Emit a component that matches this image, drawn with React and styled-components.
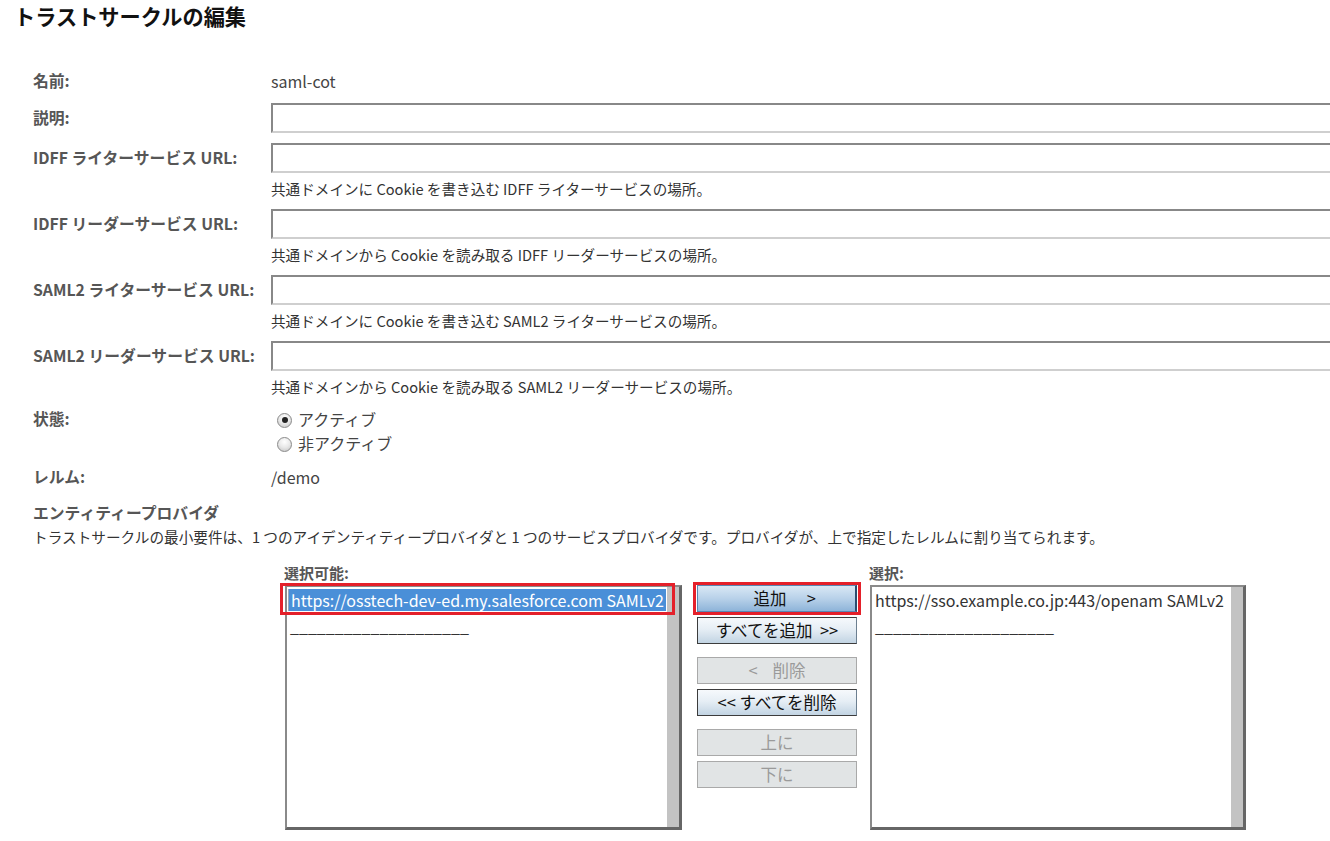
import React from "react";
import styled, { createGlobalStyle, css } from "styled-components";

const GlobalStyle = createGlobalStyle`
  html, body {
    margin: 0;
    padding: 0;
    background: #ffffff;
    overflow: hidden;
  }
  body {
    font-family: "Noto Sans CJK JP", "Noto Sans", sans-serif;
    color: #333;
  }
  * { box-sizing: border-box; }
`;

const Page = styled.div`
  width: 1330px;
  height: 841px;
  overflow: hidden;
`;

const Title = styled.h1`
  margin: 0;
  padding-left: 14px;
  height: 32px;
  line-height: 32px;
  font-size: 21.2px;
  font-weight: 700;
  color: #111;
`;

const Form = styled.div`
  margin-top: 37px;
  padding-left: 33px;
  display: flex;
  flex-direction: column;
  gap: 10px;
`;

const Field = styled.div`
  display: flex;
  align-items: ${(p) => (p.$top ? "flex-start" : "stretch")};
`;

const Label = styled.div`
  width: 238px;
  flex: none;
  font-size: 15.8px;
  font-weight: 700;
  color: #565656;
  line-height: 24px;
  white-space: nowrap;
  ${(p) =>
    p.$input &&
    css`
      line-height: 30px;
    `}
`;

const Content = styled.div`
  flex: 1;
  display: flex;
  flex-direction: column;
`;

const Value = styled.div`
  font-size: 16px;
  line-height: 24px;
  color: #444;
`;

const TextInput = styled.input`
  display: block;
  width: 100%;
  height: 30px;
  margin: 0;
  padding: 0 4px;
  border: none;
  border-top: 2px solid #888;
  border-left: 2px solid #888;
  border-bottom: 2px solid #cfcfcf;
  background: #fff;
  outline: none;
  font-family: inherit;
  font-size: 15px;
`;

const Help = styled.div`
  margin-top: 5px;
  font-size: 14.6px;
  line-height: 21px;
  color: #333;
`;

const RadioGroup = styled.div`
  display: flex;
  flex-direction: column;
`;

const RadioRow = styled.label`
  display: flex;
  align-items: center;
  height: 24px;
  font-size: 16px;
  color: #444;
  padding-left: 6px;
`;

const RadioDot = styled.span`
  width: 15px;
  height: 15px;
  border-radius: 50%;
  border: 1px solid #8a8a8a;
  background: radial-gradient(circle at 50% 30%, #ffffff 0%, #e8e8e8 50%, #c2c2c2 100%);
  margin-right: 6px;
  margin-top: 2px;
  display: flex;
  align-items: center;
  justify-content: center;
  flex: none;
  &::after {
    content: "";
    width: 6px;
    height: 6px;
    border-radius: 50%;
    background: ${(p) => (p.$checked ? "#222" : "transparent")};
  }
`;

const Section = styled.div`
  margin-top: 2px;
`;

const Heading = styled.div`
  font-size: 15.8px;
  font-weight: 700;
  color: #565656;
  line-height: 24px;
`;

const Desc = styled.div`
  font-size: 14.65px;
  line-height: 24px;
  color: #333;
  white-space: nowrap;
`;

const Chooser = styled.div`
  margin-left: 252px;
  margin-top: 14px;
  display: grid;
  grid-template-columns: 397px 160px 376px;
  column-gap: 14px;
  grid-template-rows: 22px 245px;
`;

const ListTitle = styled.div`
  font-size: 15px;
  font-weight: 700;
  color: #565656;
  line-height: 20px;
  margin-left: -1px;
`;

const ListBox = styled.div`
  display: flex;
  border-top: 2px solid #8a8a8a;
  border-left: 2px solid #8a8a8a;
  border-right: 3px solid #666;
  border-bottom: 3px solid #666;
  background: #fff;
  height: 245px;
`;

const Options = styled.div`
  flex: 1;
  padding: 2px 1px 0 1px;
  position: relative;
`;

const Option = styled.div`
  position: relative;
  height: 22px;
  line-height: 22px;
  padding-left: 2px;
  font-size: 16px;
  white-space: nowrap;
  color: ${(p) => (p.$selected ? "#fff" : "#333")};
  background: ${(p) => (p.$selected ? "#4a8fd8" : "transparent")};
  ${(p) =>
    p.$selected &&
    css`
      border-left: 1px solid #9aa8b8;
    `}
  ${(p) =>
    p.$sep &&
    css`
      margin-top: 4px;
    `}
  ${(p) =>
    p.$mark &&
    css`
      &::after {
        content: "";
        position: absolute;
        left: -9px;
        right: -9px;
        top: -6px;
        bottom: -4px;
        border: 3px solid #e4202a;
        pointer-events: none;
      }
    `}
`;

const Scrollbar = styled.div`
  width: 12px;
  flex: none;
  background: #c3c3c3;
`;

const ButtonColumn = styled.div`
  display: flex;
  flex-direction: column;
  padding-left: 1px;
`;

const ButtonGroup = styled.div`
  display: flex;
  flex-direction: column;
  gap: 5px;
  & + & {
    margin-top: 13px;
  }
`;

const Button = styled.button`
  position: relative;
  width: 160px;
  height: 27px;
  margin: 0;
  padding: 0;
  font-family: inherit;
  font-size: 16.5px;
  line-height: 25px;
  white-space: pre;
  color: #111;
  border: 1px solid #3c3c3c;
  border-right-color: #6c7f90;
  background: linear-gradient(to bottom, #f6f9fc 0%, #e6eef5 45%, #c2d4e3 100%);
  ${(p) =>
    p.$active &&
    css`
      background: linear-gradient(to bottom, #d9e8f5 0%, #b8d1e9 50%, #8eb4d9 100%);
      border-color: #5a87b3;
      border-right: 2px solid #2b4d70;
    `}
  ${(p) =>
    p.disabled &&
    css`
      color: #9a9a9a;
      border: 1px solid #a9a9a9;
      background: #e1e4e5;
    `}
  ${(p) =>
    p.$mark &&
    css`
      &::after {
        content: "";
        position: absolute;
        left: -5px;
        right: -6px;
        top: -4px;
        bottom: -4px;
        border: 3px solid #e4202a;
        pointer-events: none;
      }
    `}
`;

const SEP = "____________________";

export default function App() {
  return (
    <Page>
      <GlobalStyle />
      <Title>トラストサークルの編集</Title>
      <Form>
        <Field>
          <Label>名前:</Label>
          <Content>
            <Value>saml-cot</Value>
          </Content>
        </Field>
        <Field $top>
          <Label $input>説明:</Label>
          <Content>
            <TextInput type="text" />
          </Content>
        </Field>
        <Field $top>
          <Label $input>IDFF ライターサービス URL:</Label>
          <Content>
            <TextInput type="text" />
            <Help>共通ドメインに Cookie を書き込む IDFF ライターサービスの場所。</Help>
          </Content>
        </Field>
        <Field $top>
          <Label $input>IDFF リーダーサービス URL:</Label>
          <Content>
            <TextInput type="text" />
            <Help>共通ドメインから Cookie を読み取る IDFF リーダーサービスの場所。</Help>
          </Content>
        </Field>
        <Field $top>
          <Label $input>SAML2 ライターサービス URL:</Label>
          <Content>
            <TextInput type="text" />
            <Help>共通ドメインに Cookie を書き込む SAML2 ライターサービスの場所。</Help>
          </Content>
        </Field>
        <Field $top>
          <Label $input>SAML2 リーダーサービス URL:</Label>
          <Content>
            <TextInput type="text" />
            <Help>共通ドメインから Cookie を読み取る SAML2 リーダーサービスの場所。</Help>
          </Content>
        </Field>
        <Field $top>
          <Label>状態:</Label>
          <RadioGroup>
            <RadioRow>
              <RadioDot $checked />
              アクティブ
            </RadioRow>
            <RadioRow>
              <RadioDot />
              非アクティブ
            </RadioRow>
          </RadioGroup>
        </Field>
        <Field>
          <Label>レルム:</Label>
          <Content>
            <Value>/demo</Value>
          </Content>
        </Field>
        <Section>
          <Heading>エンティティープロバイダ</Heading>
          <Desc>
            トラストサークルの最小要件は、1 つのアイデンティティープロバイダと 1 つのサービスプロバイダです。プロバイダが、上で指定したレルムに割り当てられます。
          </Desc>
          <Chooser>
            <ListTitle>選択可能:</ListTitle>
            <div />
            <ListTitle>選択:</ListTitle>
            <ListBox>
              <Options>
                <Option $selected $mark>
                  https://osstech-dev-ed.my.salesforce.com SAMLv2
                </Option>
                <Option $sep>{SEP}</Option>
              </Options>
              <Scrollbar />
            </ListBox>
            <ButtonColumn>
              <ButtonGroup>
                <Button $active $mark>{"\u3000追加\u3000 >"}</Button>
                <Button>{"すべてを追加  >>"}</Button>
              </ButtonGroup>
              <ButtonGroup>
                <Button disabled>{"<    削除"}</Button>
                <Button>{"<< すべてを削除"}</Button>
              </ButtonGroup>
              <ButtonGroup>
                <Button disabled>上に</Button>
                <Button disabled>下に</Button>
              </ButtonGroup>
            </ButtonColumn>
            <ListBox>
              <Options>
                <Option>https://sso.example.co.jp:443/openam SAMLv2</Option>
                <Option $sep>{SEP}</Option>
              </Options>
              <Scrollbar />
            </ListBox>
          </Chooser>
        </Section>
      </Form>
    </Page>
  );
}
